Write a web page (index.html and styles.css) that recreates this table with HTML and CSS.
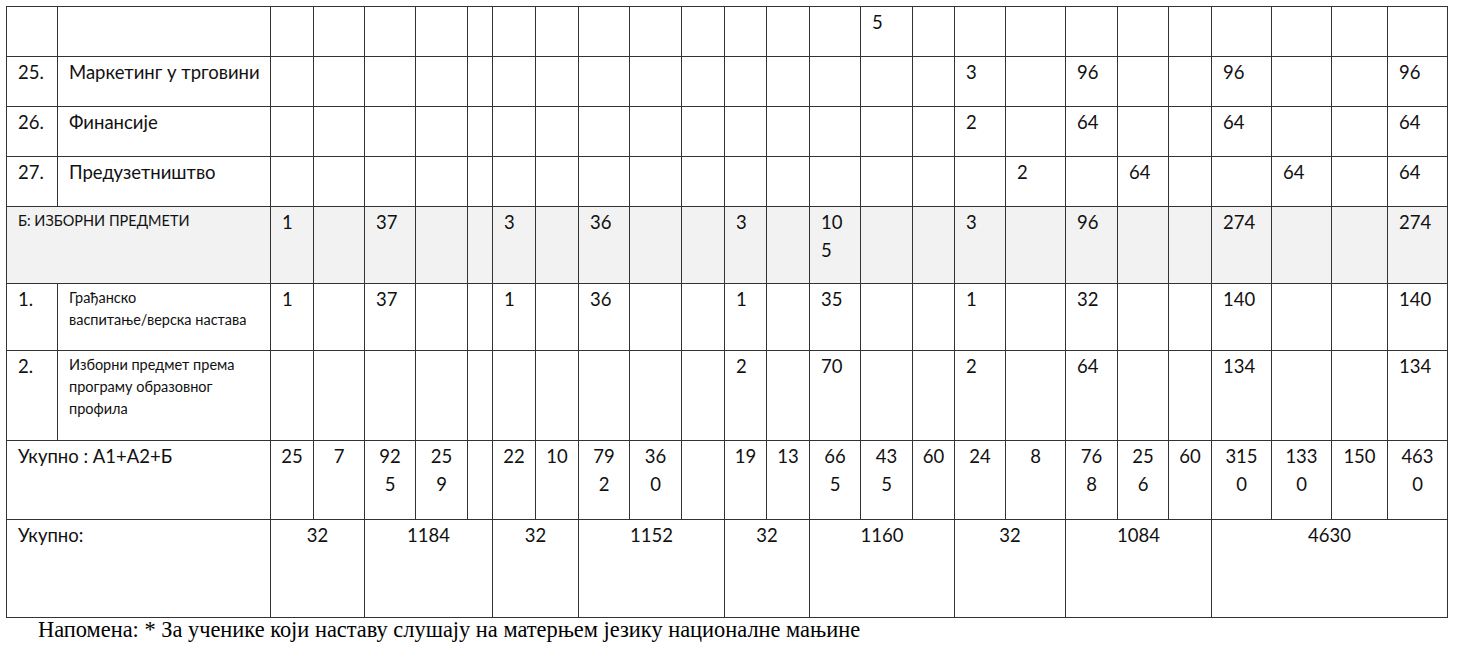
FILE: index.html
```html
<!DOCTYPE html>
<html lang="sr">
<head>
<meta charset="utf-8">
<link rel="stylesheet" href="styles.css">
</head>
<body>
<div class="page">
<table class="plan">
<colgroup>
<col style="width:51px"><col style="width:213px"><col style="width:43px"><col style="width:51px"><col style="width:51px"><col style="width:52px"><col style="width:25px"><col style="width:43px"><col style="width:43px"><col style="width:51px"><col style="width:52px"><col style="width:43px"><col style="width:42px"><col style="width:43px"><col style="width:51px"><col style="width:52px"><col style="width:42px"><col style="width:51px"><col style="width:60px"><col style="width:52px"><col style="width:51px"><col style="width:43px"><col style="width:60px"><col style="width:60px"><col style="width:56px"><col style="width:60px">
</colgroup>
<tr class="r-cont">
<td></td><td></td><td></td><td></td><td></td><td></td><td></td><td></td><td></td><td></td><td></td><td></td><td></td><td></td><td></td><td>5</td><td></td><td></td><td></td><td></td><td></td><td></td><td></td><td></td><td></td><td></td>
</tr>
<tr class="r-std">
<td>25.</td><td>Маркетинг у трговини</td><td></td><td></td><td></td><td></td><td></td><td></td><td></td><td></td><td></td><td></td><td></td><td></td><td></td><td></td><td></td><td>3</td><td></td><td>96</td><td></td><td></td><td>96</td><td></td><td></td><td>96</td>
</tr>
<tr class="r-std">
<td>26.</td><td>Финансије</td><td></td><td></td><td></td><td></td><td></td><td></td><td></td><td></td><td></td><td></td><td></td><td></td><td></td><td></td><td></td><td>2</td><td></td><td>64</td><td></td><td></td><td>64</td><td></td><td></td><td>64</td>
</tr>
<tr class="r-std">
<td>27.</td><td>Предузетништво</td><td></td><td></td><td></td><td></td><td></td><td></td><td></td><td></td><td></td><td></td><td></td><td></td><td></td><td></td><td></td><td></td><td>2</td><td></td><td>64</td><td></td><td></td><td>64</td><td></td><td>64</td>
</tr>
<tr class="r-group">
<td colspan="2" class="small">Б: ИЗБОРНИ ПРЕДМЕТИ</td><td>1</td><td></td><td>37</td><td></td><td></td><td>3</td><td></td><td>36</td><td></td><td></td><td>3</td><td></td><td>10<br>5</td><td></td><td></td><td>3</td><td></td><td>96</td><td></td><td></td><td>274</td><td></td><td></td><td>274</td>
</tr>
<tr class="r-el1">
<td>1.</td><td class="small">Грађанско<br>васпитање/верска настава</td><td>1</td><td></td><td>37</td><td></td><td></td><td>1</td><td></td><td>36</td><td></td><td></td><td>1</td><td></td><td>35</td><td></td><td></td><td>1</td><td></td><td>32</td><td></td><td></td><td>140</td><td></td><td></td><td>140</td>
</tr>
<tr class="r-el2">
<td>2.</td><td class="small">Изборни предмет према<br>програму образовног<br>профила</td><td></td><td></td><td></td><td></td><td></td><td></td><td></td><td></td><td></td><td></td><td>2</td><td></td><td>70</td><td></td><td></td><td>2</td><td></td><td>64</td><td></td><td></td><td>134</td><td></td><td></td><td>134</td>
</tr>
<tr class="r-sum">
<td colspan="2" class="label">Укупно : А1+А2+Б</td><td>25</td><td>7</td><td>92<br>5</td><td>25<br>9</td><td></td><td>22</td><td>10</td><td>79<br>2</td><td>36<br>0</td><td></td><td>19</td><td>13</td><td>66<br>5</td><td>43<br>5</td><td>60</td><td>24</td><td>8</td><td>76<br>8</td><td>25<br>6</td><td>60</td><td>315<br>0</td><td>133<br>0</td><td>150</td><td>463<br>0</td>
</tr>
<tr class="r-total">
<td colspan="2" class="label">Укупно:</td><td colspan="2">32</td><td colspan="3">1184</td><td colspan="2">32</td><td colspan="3">1152</td><td colspan="2">32</td><td colspan="3">1160</td><td colspan="2">32</td><td colspan="3">1084</td><td colspan="4">4630</td>
</tr>
</table>
<p class="note">Напомена: * За ученике који наставу слушају на матерњем језику националне мањине</p>
</div>
</body>
</html>
```
FILE: styles.css
```css
html, body {
  margin: 0;
  padding: 0;
  background: #ffffff;
}
.page {
  padding: 6px 0 0 6px;
}
.plan {
  border-collapse: collapse;
  table-layout: fixed;
  width: 1442px;
  font-family: Lato, "Open Sans", sans-serif;
  font-size: 18.5px;
  line-height: 28px;
  color: #111;
}
.plan td {
  box-sizing: border-box;
  border: 1px solid #333;
  vertical-align: top;
  padding: 1px 0 0 11px;
  white-space: nowrap;
  overflow: hidden;
}
.plan td.small {
  font-size: 14.5px;
  line-height: 22px;
  padding-top: 3px;
}
.r-cont td, .r-std td { height: 50px; }
.r-group td { height: 77px; background: #f2f2f2; }
.r-el1 td { height: 67px; }
.r-el2 td { height: 90px; }
.r-sum td { height: 79px; text-align: center; padding-left: 0; }
.r-sum td.label, .r-total td.label { text-align: left; padding-left: 11px; }
.r-total td { height: 98px; text-align: center; padding-left: 0; }
.note {
  margin: 0;
  padding: 0 0 0 32px;
  font-family: "Liberation Serif", "Times New Roman", serif;
  font-size: 22.4px;
  line-height: 24px;
  color: #000;
  white-space: nowrap;
}
```
